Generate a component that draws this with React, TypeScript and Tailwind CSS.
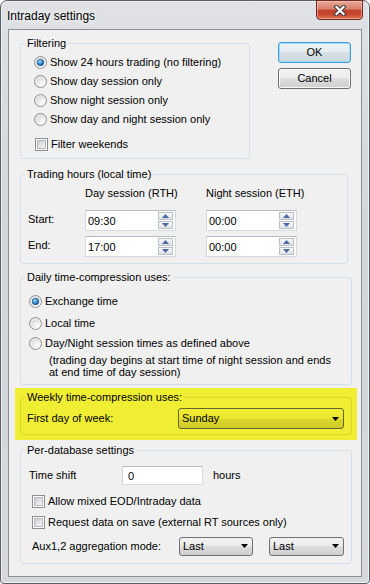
import type { ReactNode } from 'react'

function Radio({ checked }: { checked?: boolean }) {
  return (
    <svg width="13" height="13" viewBox="0 0 13 13" className="shrink-0">
      <defs>
        <radialGradient id="rface" cx="0.65" cy="0.7" r="0.75">
          <stop offset="0" stopColor="#ffffff" />
          <stop offset="1" stopColor="#cfd0d2" />
        </radialGradient>
        <radialGradient id="rdot" cx="0.4" cy="0.35" r="0.75">
          <stop offset="0" stopColor="#a6dcfa" />
          <stop offset="0.55" stopColor="#2f82c8" />
          <stop offset="1" stopColor="#12497f" />
        </radialGradient>
      </defs>
      <circle cx="6.5" cy="6.5" r="6" fill="url(#rface)" stroke="#929292" />
      <circle cx="6.5" cy="6.5" r="4.6" fill="none" stroke="#f7f7f7" strokeWidth="0.8" />
      {checked && <circle cx="6.5" cy="6.5" r="3.3" fill="url(#rdot)" stroke="#1b4d7d" strokeWidth="0.6" />}
    </svg>
  )
}

function Check() {
  return (
    <span className="flex h-[13px] w-[13px] shrink-0 border border-[#8e8f8f] bg-white p-[1px]">
      <span className="flex-1 border border-[#b4b8bd] bg-[linear-gradient(135deg,#c9cdd3,#f7f7f7)]" />
    </span>
  )
}

function RadioRow({ label, checked, className = '' }: { label: string; checked?: boolean; className?: string }) {
  return (
    <div className={`flex items-center gap-[3px] ${className}`}>
      <Radio checked={checked} />
      <span>{label}</span>
    </div>
  )
}

function CheckRow({ label, className = '' }: { label: string; className?: string }) {
  return (
    <div className={`flex h-[20px] items-center gap-[3px] ${className}`}>
      <Check />
      <span>{label}</span>
    </div>
  )
}

function Group({
  title,
  yellow,
  className = '',
  children,
}: {
  title: string
  yellow?: boolean
  className?: string
  children: ReactNode
}) {
  return (
    <fieldset
      className={`rounded-[3px] border ${yellow ? 'border-[#d8d52c]' : 'border-[#d5dfe5]'} ${className}`}
    >
      <legend className="ml-[4px] px-[2px] leading-[16px]">{title}</legend>
      {children}
    </fieldset>
  )
}

function Spin({ up }: { up?: boolean }) {
  return (
    <span className="flex h-[8px] w-[15px] items-center justify-center border border-[#bcc1c8] bg-[linear-gradient(to_bottom,#f7f8f9,#dde1e6)]">
      <svg width="7" height="4" viewBox="0 0 7 4">
        <path d={up ? 'M3.5 0L7 4H0z' : 'M0 0h7L3.5 4z'} fill="#4a68a3" />
      </svg>
    </span>
  )
}

function TimeBox({ value }: { value: string }) {
  return (
    <div className="flex h-[21px] w-[91px] items-center border border-[#d6dade] border-t-[#b9bdc3] bg-white pl-[2px] pr-[2px]">
      <span className="flex-1 pt-[2px]">{value}</span>
      <div className="flex flex-col gap-[1px]">
        <Spin up />
        <Spin />
      </div>
    </div>
  )
}

function Combo({ value, yellow, className = '' }: { value: string; yellow?: boolean; className?: string }) {
  return (
    <div
      className={`flex items-center justify-between rounded-[3px] border pl-[3px] pr-[4px] ${
        yellow
          ? 'border-[#66652c] bg-[linear-gradient(to_bottom,#f0ed31_0%,#e8e52d_50%,#dad62b_50%,#cfcb29_100%)]'
          : 'border-[#707070] bg-[linear-gradient(to_bottom,#f2f2f2_0%,#ebebeb_50%,#dddddd_50%,#cfcfcf_100%)]'
      } ${className}`}
    >
      <span>{value}</span>
      <svg width="7" height="4" viewBox="0 0 7 4">
        <path d="M0 0h7L3.5 4z" fill="#000" />
      </svg>
    </div>
  )
}

export default function App() {
  return (
    <div className="h-[584px] w-[370px] bg-white font-['Liberation_Sans',Arial,sans-serif] text-[11px] text-black">
      <div className="flex h-[584px] flex-col rounded-t-[7px] rounded-b-[4px] border border-[#5a5f66] bg-[linear-gradient(to_bottom,#dfe1e4,#d2d5d9_40%,#d6d8db)] shadow-[inset_0_0_0_1px_#eef0f2]">
        {/* title bar */}
        <div className="flex h-[28px] items-start">
          <span className="ml-[6px] mt-[6px] text-[12px] [text-shadow:0_0_6px_#fff,0_0_10px_#fff]">
            Intraday settings
          </span>
          <div className="ml-auto mr-[6px] -mt-[1px] flex h-[20px] w-[47px] items-center justify-center rounded-b-[4px] border border-[#6e2a22] bg-[linear-gradient(to_bottom,#e8a898_0%,#d97f6c_45%,#c3432d_50%,#c9472f_75%,#e0714f_100%)] shadow-[inset_0_0_0_1px_rgba(255,220,210,0.45)]">
            <svg width="14" height="11" viewBox="0 0 14 11">
              <path d="M3.5 2L10.5 9M10.5 2L3.5 9" stroke="#3a3a3a" strokeWidth="4.2" strokeLinecap="square" />
              <path d="M3.5 2L10.5 9M10.5 2L3.5 9" stroke="#ffffff" strokeWidth="2.2" strokeLinecap="square" />
            </svg>
          </div>
        </div>

        {/* client area */}
        <div className="mx-[7px] h-[548px] border border-[#8a9097] bg-[#f0f0f0] pl-[11px] pr-[10px] pt-[5px]">
          <div className="flex items-start">
            <Group title="Filtering" className="w-[230px]">
              <div className="pl-[13px] pt-[2px] pb-[4px]">
                <RadioRow checked label="Show 24 hours trading (no filtering)" className="h-[19px]" />
                <RadioRow label="Show day session only" className="h-[19px]" />
                <RadioRow label="Show night session only" className="h-[19px]" />
                <RadioRow label="Show day and night session only" className="h-[19px]" />
                <CheckRow label="Filter weekends" className="mt-[5px] h-[19px] pl-[1px]" />
              </div>
            </Group>
            <div className="ml-auto mt-[7px] flex flex-col gap-[5px]">
              <button className="h-[21px] w-[73px] rounded-[3px] border border-[#3d9be0] bg-[linear-gradient(to_bottom,#eef3f6_0%,#e6ecf0_50%,#d7e0e6_50%,#cbd6de_100%)] shadow-[inset_0_0_0_1px_#9fdcf8]">
                OK
              </button>
              <button className="h-[21px] w-[73px] rounded-[3px] border border-[#707070] bg-[linear-gradient(to_bottom,#f2f2f2_0%,#ebebeb_50%,#dddddd_50%,#cfcfcf_100%)] shadow-[inset_0_0_0_1px_#fafafa]">
                Cancel
              </button>
            </div>
          </div>

          <Group title="Trading hours (local time)" className="mt-[7px] w-[328px]">
            <div className="pl-[7px] pt-[3px] pb-[6px]">
              <div className="flex h-[16px] items-center">
                <span className="w-[57px]" />
                <span className="w-[121px]">Day session (RTH)</span>
                <span>Night session (ETH)</span>
              </div>
              <div className="mt-[9px] flex items-center">
                <span className="mb-[3px] w-[57px]">Start:</span>
                <TimeBox value="09:30" />
                <span className="w-[30px]" />
                <TimeBox value="00:00" />
              </div>
              <div className="mt-[5px] flex items-center">
                <span className="mb-[3px] w-[57px]">End:</span>
                <TimeBox value="17:00" />
                <span className="w-[30px]" />
                <TimeBox value="00:00" />
              </div>
            </div>
          </Group>

          <Group title="Daily time-compression uses:" className="mt-[5px] w-[332px]">
            <div className="pl-[8px] pt-[6px] pb-[6px]">
              <RadioRow checked label="Exchange time" className="h-[20px]" />
              <RadioRow label="Local time" className="mt-[2px] h-[20px]" />
              <RadioRow label="Day/Night session times as defined above" className="h-[20px]" />
              <p className="mt-[1px] pl-[20px] leading-[12px]">
                (trading day begins at start time of night session and ends
                <br />
                at end time of day session)
              </p>
            </div>
          </Group>

          <div className="-ml-[5px] mt-[3px] w-[342px] bg-[#f0ee33] px-[5px] pt-[1px] pb-[5px]">
            <Group yellow title="Weekly time-compression uses:" className="w-[332px]">
              <div className="flex items-center pl-[6px] pt-[3px] pb-[5px]">
                <span className="w-[151px]">First day of week:</span>
                <Combo yellow value="Sunday" className="h-[21px] w-[166px]" />
              </div>
            </Group>
          </div>

          <Group title="Per-database settings" className="mt-[2px] w-[332px]">
            <div className="pt-[8px] pb-[7px]">
              <div className="flex items-center pl-[8px]">
                <span className="w-[93px]">Time shift</span>
                <div className="flex h-[19px] w-[81px] items-center border border-[#d6dade] border-t-[#b9bdc3] bg-white pl-[5px] pt-[1px]">
                  0
                </div>
                <span className="ml-[10px]">hours</span>
              </div>
              <CheckRow label="Allow mixed EOD/Intraday data" className="mt-[6px] pl-[11px]" />
              <CheckRow label="Request data on save (external RT sources only)" className="mt-[1px] pl-[11px]" />
              <div className="mt-[4px] flex h-[20px] items-center pl-[11px]">
                <span className="w-[147px]">Aux1,2 aggregation mode:</span>
                <Combo value="Last" className="h-[19px] w-[74px]" />
                <Combo value="Last" className="ml-[16px] h-[19px] w-[75px]" />
              </div>
            </div>
          </Group>
        </div>
      </div>
    </div>
  )
}
